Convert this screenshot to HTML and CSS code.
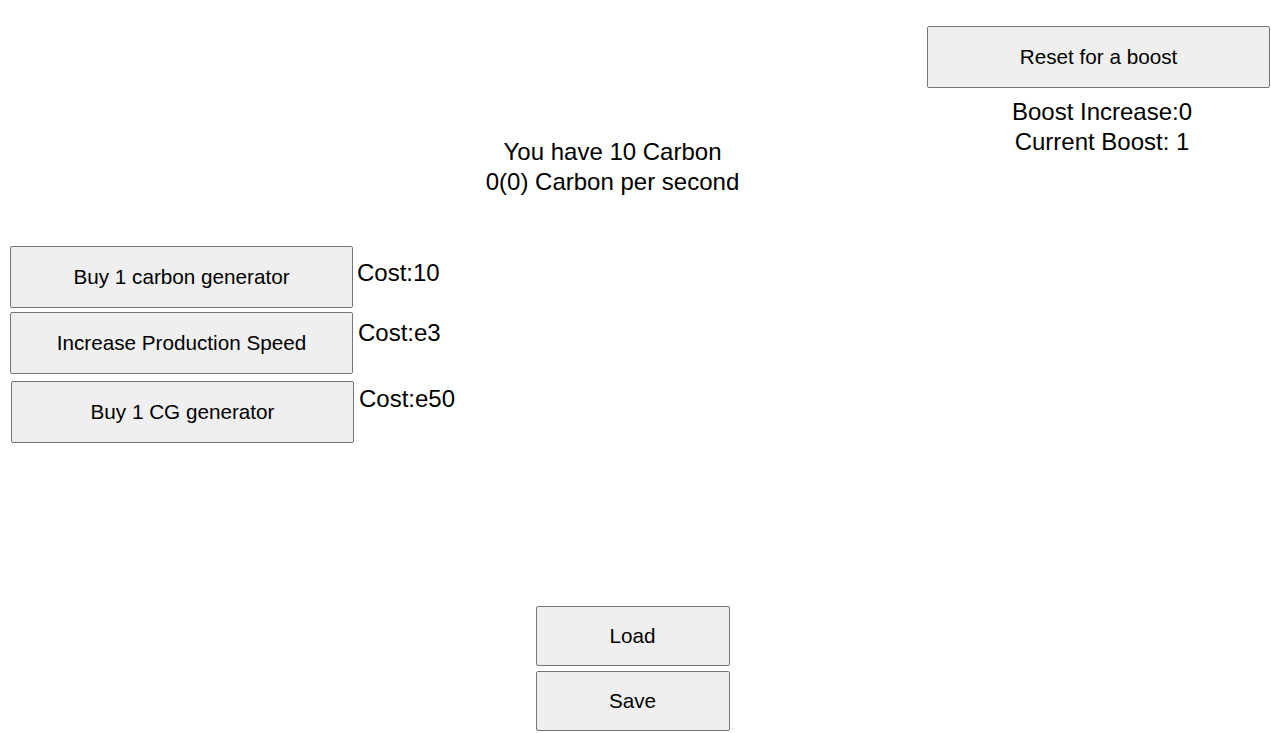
FILE: index.html
```html
<!DOCTYPE html>
<html lang="en">
<head>
  <meta charset="UTF-8">
  <title>Carbon</title>
  <link rel="stylesheet" href="styles.css">
</head>
<body>
  <div class="top">
    <div class="boost">
      <button class="btn btn-reset">Reset for a boost</button>
      <div class="boost-info">
        <div>Boost Increase:0</div>
        <div>Current Boost: 1</div>
      </div>
    </div>
  </div>

  <div class="stats">
    <div>You have 10 Carbon</div>
    <div>0(0) Carbon per second</div>
  </div>

  <div class="shop">
    <div class="row row-1">
      <button class="btn btn-buy">Buy 1 carbon generator</button>
      <span class="cost">Cost:10</span>
    </div>
    <div class="row row-2">
      <button class="btn btn-buy">Increase Production Speed</button>
      <span class="cost">Cost:e3</span>
    </div>
    <div class="row row-3">
      <button class="btn btn-buy">Buy 1 CG generator</button>
      <span class="cost">Cost:e50</span>
    </div>
  </div>

  <div class="saves">
    <button class="btn btn-save">Load</button>
    <button class="btn btn-save">Save</button>
  </div>
</body>
</html>
```

FILE: styles.css
```css
body {
  margin: 0;
  font-family: "Liberation Sans", Arial, sans-serif;
  color: #000;
  background: #fff;
}
.btn {
  font-family: "Liberation Sans", Arial, sans-serif;
  font-size: 20.7px;
  color: #000;
  background: #efefef;
  border: 1px solid #767676;
  border-radius: 2px;
  padding: 0;
  margin: 0;
}
.top {
  display: flex;
  justify-content: flex-end;
  padding-top: 26px;
  padding-right: 1px;
}
.boost {
  width: 343px;
}
.btn-reset {
  width: 343px;
  height: 62px;
  display: block;
}
.boost-info {
  margin-top: 9px;
  padding-left: 7px;
  text-align: center;
  font-size: 24px;
  line-height: 30px;
}
.stats {
  margin-top: -20px;
  padding-right: 46px;
  text-align: center;
  font-size: 24px;
  line-height: 30px;
}
.shop {
  margin-top: 49px;
  padding-left: 10px;
}
.row {
  display: flex;
  align-items: flex-start;
}
.btn-buy {
  width: 343px;
  height: 62px;
}
.cost {
  font-size: 24px;
  line-height: 30px;
  margin-left: 4px;
}
.row-1 .cost { margin-top: 12px; }
.row-2 { margin-top: 4px; }
.row-2 .cost { margin-top: 6px; margin-left: 5px; }
.row-3 { margin-top: 7px; padding-left: 1px; }
.row-3 .cost { margin-top: 3px; margin-left: 5px; }
.saves {
  margin-top: 163px;
  padding-right: 6px;
  display: flex;
  flex-direction: column;
  align-items: center;
  gap: 5px;
}
.btn-save {
  width: 194px;
  height: 60px;
}
```
